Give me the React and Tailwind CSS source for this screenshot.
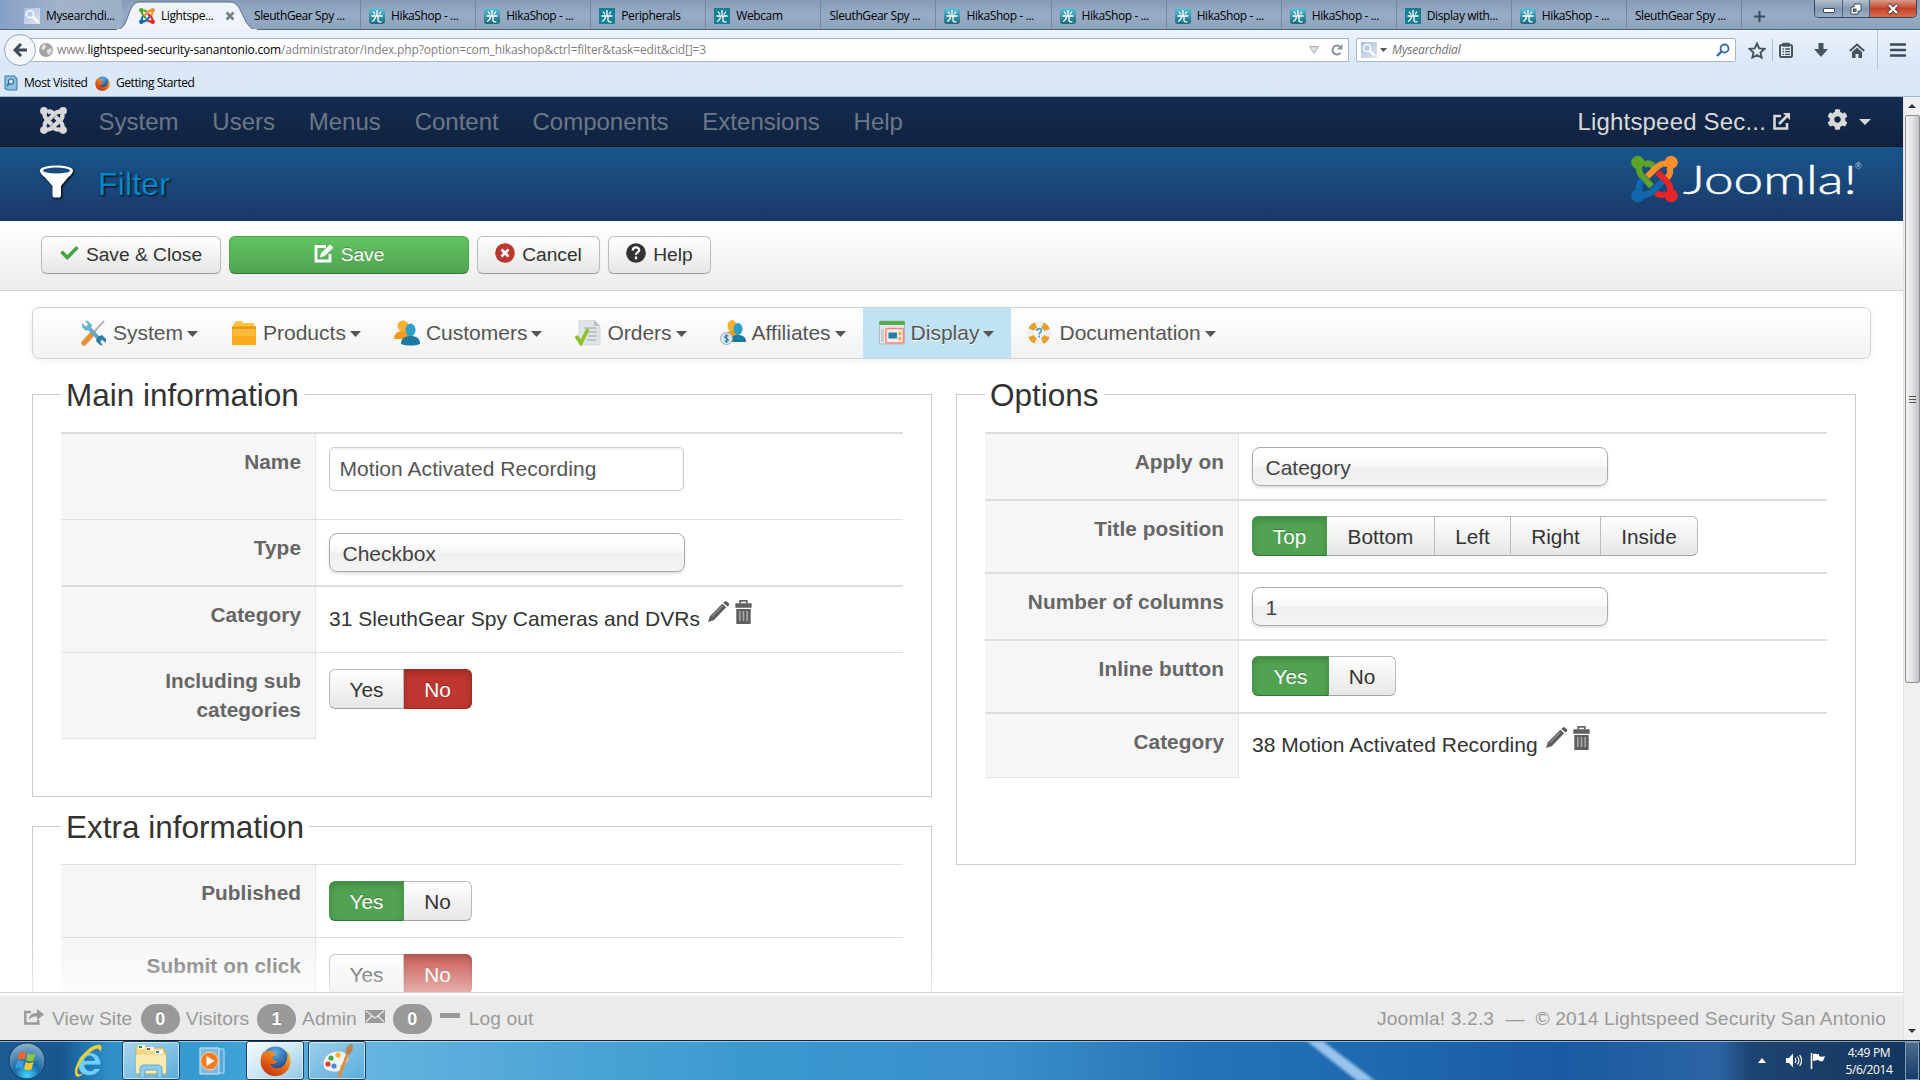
import React from "react";
import { FaCheck, FaCog } from "react-icons/fa";

const UI = "font-['Open_Sans','Noto_Sans',sans-serif]";

/* ---------- shared drawings ---------- */

function JoomlaMark({ className, colors, weight = 6.4 }) {
  const [green, orange, red, blue] = colors;
  return (
    <svg className={className} viewBox="0 0 48 48" fill="none" strokeWidth={weight}>
      <g stroke={green}>
        <path d="M13 9.500C18 6.500 21.500 9 23.500 12" />
        <path d="M8 9C8 21 10 19 21 31.500" />
        <circle cx="7" cy="7" r="6.800" fill={green} stroke="none" />
      </g>
      <g stroke={orange}>
        <path d="M39 12C41.500 17 39.500 20 37 23" />
        <path d="M40 8C28 8 29 9.500 16.500 21.500" />
        <circle cx="41" cy="7" r="6.800" fill={orange} stroke="none" />
      </g>
      <g stroke={red}>
        <path d="M36 39C31 42 28 40 25 37.500" />
        <path d="M40.500 40C40.500 28 39 29.500 27 17" />
        <circle cx="41" cy="41" r="6.800" fill={red} stroke="none" />
      </g>
      <g stroke={blue}>
        <path d="M9.500 36C6.500 31 9 28 11.500 25" />
        <path d="M8 40.500C20 40.500 19.500 39 32 26.500" />
        <circle cx="7" cy="41" r="6.800" fill={blue} stroke="none" />
      </g>
    </svg>
  );
}

const BRAND = ["#5ba329", "#fb8f2c", "#e62527", "#1069ae"];
const PALE = ["#d9d9d9", "#d9d9d9", "#d9d9d9", "#d9d9d9"];

function HikaIcon({ flat }) {
  return (
    <svg className="h-4 w-4 shrink-0" viewBox="0 0 16 16">
      <defs>
        <linearGradient id="hika" x1="0" y1="0" x2="0" y2="1">
          <stop offset="0" stopColor="#5ec0d6" />
          <stop offset="1" stopColor="#17697b" />
        </linearGradient>
      </defs>
      <rect width="16" height="16" rx={flat ? 0 : 3} fill={flat ? "#177f93" : "url(#hika)"} />
      <path d="M8 2v6M4 3.500l2 3M12 3.500l-2 3M2.500 8h11M6.500 8c0 3-1.500 4.500-3.500 5.500M9 8v4.500c0 1 .5 1.300 1.500 1.300h2" stroke="#fff" strokeWidth="1.300" fill="none" />
    </svg>
  );
}

function SearchTile() {
  return (
    <svg className="h-4 w-4 shrink-0" viewBox="0 0 16 16">
      <defs>
        <linearGradient id="tile" x1="0" y1="0" x2="1" y2="1">
          <stop offset="0" stopColor="#a9bedd" />
          <stop offset="1" stopColor="#dfe7f3" />
        </linearGradient>
      </defs>
      <rect width="16" height="16" fill="url(#tile)" />
      <circle cx="6" cy="6" r="3.600" fill="#b9cbe6" stroke="#fff" strokeWidth="1.500" />
      <path d="M8.500 8.500l5 5" stroke="#fff" strokeWidth="2.200" />
    </svg>
  );
}

function FirefoxIcon({ className }) {
  return (
    <svg className={className} viewBox="0 0 32 32">
      <defs>
        <radialGradient id="fxb" cx=".5" cy=".2" r=".8">
          <stop offset="0" stopColor="#5aaee6" />
          <stop offset="1" stopColor="#0f2f6e" />
        </radialGradient>
        <linearGradient id="fxo" x1="1" y1="0" x2="0.300" y2="1">
          <stop offset="0" stopColor="#fbd13c" />
          <stop offset=".45" stopColor="#ee7a1a" />
          <stop offset="1" stopColor="#c8320c" />
        </linearGradient>
      </defs>
      <circle cx="16" cy="15" r="14" fill="url(#fxb)" />
      <path d="M4 6C1 10 0 15 1 20c2 7 8 11.500 15 11.500C25 31.500 31.500 25 31.500 16c0-4-1.500-8-4-10.500 1 3 1 5 .500 8-1 6-5 10-10 10-4 0-7-2-8-5 2 1 4.500 1 6.500-.5 1-.8 2-1.500 1-2-3-.5-5-2-5-4 1-1.500 4-2 4.500-3-1-1-3-1-4-2.500C9 4 6 6 5 8z" fill="url(#fxo)" />
    </svg>
  );
}

/* ---------- browser chrome ---------- */

const TABS = [
  ["SleuthGear Spy ...", null],
  ["HikaShop - ...", "round"],
  ["HikaShop - ...", "round"],
  ["Peripherals", "flat"],
  ["Webcam", "flat"],
  ["SleuthGear Spy ...", null],
  ["HikaShop - ...", "round"],
  ["HikaShop - ...", "round"],
  ["HikaShop - ...", "round"],
  ["HikaShop - ...", "round"],
  ["Display with...", "flat"],
  ["HikaShop - ...", "round"],
  ["SleuthGear Spy ...", null],
];

function TabStrip() {
  return (
    <div className={`relative flex h-[30px] border-b border-[#4d6179] bg-gradient-to-b from-[#869bb5] via-[#97acc6] to-[#8da2bb] text-[12px] tracking-[-0.4px] text-black ${UI}`}>
      <div className="flex w-[122px] items-center gap-1.5 bg-gradient-to-r from-[#86a0c8] via-[#a3b3c9] to-[#9bafc7] pt-[2px] pl-6">
        <SearchTile />
        Mysearchdi...
      </div>
      <div className="relative flex w-[124px] items-center pt-[2px]">
        <svg className="absolute -top-px -left-[6px] h-[31px] w-[142px]" viewBox="0 0 142 31">
          <path d="M0 31C14 31 10 3 24 3H114C128 3 126 31 142 31Z" fill="#eff4fb" stroke="#5c7087" />
          <path d="M1 31H141" stroke="#ebf1fa" strokeWidth="2" />
        </svg>
        <div className="relative flex items-center gap-1.5 pl-[17px]">
          <JoomlaMark className="h-4 w-4" colors={BRAND} />
          Lightspe...
        </div>
        <svg className="absolute top-[11px] left-[103px] h-[10px] w-[10px]" viewBox="0 0 10 10">
          <path d="M1.500 1.500l7 7M8.500 1.500l-7 7" stroke="#76808c" strokeWidth="2.600" />
        </svg>
      </div>
      {TABS.map(([label, icon], i) => (
        <div key={i} className="flex w-[115.080px] items-center gap-1.5 border-r border-[#74889f] pt-[2px] pl-2 whitespace-nowrap">
          {icon && <HikaIcon flat={icon === "flat"} />}
          {label}
        </div>
      ))}
      <svg className="mt-[11px] ml-[12px] h-[11px] w-[11px]" viewBox="0 0 11 11">
        <path d="M5.500 0v11M0 5.500h11" stroke="#3b4a58" strokeWidth="2" />
      </svg>
      <div className="absolute top-0 right-[3px] flex h-[18px] w-[103px] overflow-hidden rounded-b-[5px] border border-t-0 border-[#34465c]">
        <div className="flex w-[28px] items-center justify-center border-r border-[#4b5e75] bg-gradient-to-b from-[#b3c0d0] via-[#8499b1] to-[#9bafc6] pt-[3px]">
          <div className="h-[5px] w-[12px] rounded-[1px] border border-[#3e4b5b] bg-white" />
        </div>
        <div className="flex w-[27px] items-center justify-center border-r border-[#4b5e75] bg-gradient-to-b from-[#b3c0d0] via-[#8499b1] to-[#9bafc6]">
          <svg className="h-[12px] w-[12px]" viewBox="0 0 12 12">
            <path d="M4 1h7v7h-3v3H1V4h3z" fill="#fff" stroke="#3e4b5b" />
            <rect x="3.500" y="6" width="2.500" height="2.500" fill="#8195ad" stroke="#3e4b5b" />
          </svg>
        </div>
        <div className="flex flex-1 items-center justify-center bg-gradient-to-b from-[#d99a8b] via-[#c2412a] to-[#d86f4b]">
          <svg className="h-[12px] w-[14px]" viewBox="0 0 14 12">
            <path d="M2.500 1.500l9 9M11.500 1.500l-9 9" stroke="#5c3a38" strokeWidth="4.200" />
            <path d="M3 2l8 8M11 2l-8 8" stroke="#fff" strokeWidth="2.400" />
          </svg>
        </div>
      </div>
    </div>
  );
}

function Toolbar() {
  return (
    <div className={`relative flex h-[40px] items-center text-[12px] ${UI}`}>
      <div className="z-10 ml-1 flex h-8 w-8 shrink-0 items-center justify-center rounded-full border border-[#93a7be] bg-[#f3f7fc]">
        <svg className="h-[14px] w-[15px]" viewBox="0 0 15 14">
          <path d="M8 1L2 7l6 6M2.500 7H14" stroke="#3c4956" strokeWidth="3" fill="none" />
        </svg>
      </div>
      <div className="-ml-[14px] flex h-6 w-[1327px] shrink-0 items-center border border-[#a4b7ce] bg-white pl-[16px] text-[#808080]">
        <svg className="mr-[4px] h-[14px] w-[14px]" viewBox="0 0 14 14">
          <circle cx="7" cy="7" r="7" fill="#a3a3a3" />
          <path d="M3 3l3-2 1 3-2 3-3-1zM8 7l4-2 1 3-3 4-2-2z" fill="#e1e1e1" />
        </svg>
        <span className="tracking-[-0.15px] whitespace-nowrap">
          www.<span className="tracking-[-0.18px] text-black">lightspeed-security-sanantonio.com</span>
          /administrator/index.php?option=com_hikashop&amp;ctrl=filter&amp;task=edit&amp;cid[]=3
        </span>
        <svg className="mr-[12px] ml-auto h-[8px] w-[10px]" viewBox="0 0 10 8">
          <path d="M.5.5h9L5 7.500z" fill="#dbe0e6" stroke="#a9b3be" />
        </svg>
        <svg className="mr-[5px] h-[12px] w-[12px]" viewBox="0 0 12 12">
          <path d="M9.500 9A4.500 4.500 0 1 1 9 2.700" fill="none" stroke="#8492a3" strokeWidth="2" />
          <path d="M11.500 0v5.500H6z" fill="#8492a3" />
        </svg>
      </div>
      <div className="ml-[7px] flex h-6 w-[380px] shrink-0 items-center rounded-[2px] border border-[#a4b7ce] bg-white pl-1 text-[#707070] italic">
        <SearchTile />
        <svg className="mx-[3px] h-[4px] w-[7px]" viewBox="0 0 7 4"><path d="M0 0h7L3.500 4z" fill="#555" /></svg>
        <span className="ml-[2px] tracking-[-0.150px]">Mysearchdial</span>
        <svg className="mr-[5px] ml-auto h-[14px] w-[14px]" viewBox="0 0 14 14">
          <circle cx="8.500" cy="5.500" r="4" fill="none" stroke="#2f6db0" strokeWidth="1.800" />
          <path d="M5.500 8.500l-4.500 4.500" stroke="#2f6db0" strokeWidth="2.400" />
        </svg>
      </div>
      <svg className="ml-[12px] h-[17px] w-[18px] shrink-0" viewBox="0 0 18 17">
        <path d="M9 1.500l2.200 4.900 5.300.5-4 3.600 1.200 5.200L9 13l-4.700 2.700 1.200-5.200-4-3.600 5.300-.5z" fill="none" stroke="#47535f" strokeWidth="1.900" />
      </svg>
      <div className="mx-[6px] h-[22px] w-px bg-[#aebccd]" />
      <svg className="h-[16px] w-[14px] shrink-0" viewBox="0 0 14 16">
        <rect x="1" y="3" width="12" height="12" rx="1.500" fill="none" stroke="#47535f" strokeWidth="2" />
        <path d="M4 4V1.500h6V4zM3.500 7h1.500M6 7h5M3.500 9.700h1.500M6 9.700h5M3.500 12.300h1.500M6 12.300h5" fill="#47535f" stroke="#47535f" strokeWidth="1.300" />
      </svg>
      <svg className="ml-[21px] h-[14px] w-[14px] shrink-0" viewBox="0 0 14 14">
        <path d="M4.500 0h5v6H14l-7 8-7-8h4.500z" fill="#47535f" />
      </svg>
      <svg className="ml-[21px] h-[15px] w-[16px] shrink-0" viewBox="0 0 16 15">
        <path d="M.8 8L8 1.500 15.200 8" fill="none" stroke="#47535f" strokeWidth="2" />
        <path d="M3 9l5-4.500L13 9v6H9.500v-4h-3v4H3z" fill="#47535f" />
      </svg>
      <div className="mr-[12px] ml-[12px] h-[40px] w-px bg-[#b6c5d7]" />
      <svg className="h-[14px] w-[16px] shrink-0" viewBox="0 0 16 14">
        <path d="M1 1.500h14M1 7h14M1 12.500h14" stroke="#3d4a57" strokeWidth="2.600" strokeLinecap="round" />
      </svg>
    </div>
  );
}

function Bookmarks() {
  return (
    <div className={`flex h-[27px] items-center pb-px pl-1 text-[12px] tracking-[-0.42px] text-black ${UI}`}>
      <svg className="mr-[6px] h-[16px] w-[14px]" viewBox="0 0 14 16">
        <path d="M1 1h10v2h2v12H3v-1H1z" fill="#8fc0e0" stroke="#3d7ba8" />
        <circle cx="7" cy="6.500" r="2.500" fill="#e8f4fb" stroke="#2d6690" strokeWidth="1.200" />
        <path d="M5 8.500L3 11" stroke="#2d6690" strokeWidth="1.600" />
      </svg>
      <span className="w-[71px] whitespace-nowrap">Most Visited</span>
      <FirefoxIcon className="mr-[6px] h-[15px] w-[15px]" />
      <span className="whitespace-nowrap">Getting Started</span>
    </div>
  );
}

/* ---------- admin page ---------- */

function Navbar() {
  return (
    <div className="flex h-[50px] shrink-0 items-center border-b border-[#0b1728] bg-gradient-to-b from-[#142b52] to-[#10223e] text-[24px] text-[#6d7788]">
      <JoomlaMark className="mr-[31.500px] mb-[2px] ml-[40px] h-[27px] w-[27px]" colors={PALE} weight={7.6} />
      <div className="flex gap-[33.800px]">
        {["System", "Users", "Menus", "Content", "Components", "Extensions", "Help"].map((t) => (
          <span key={t}>{t}</span>
        ))}
      </div>
      <span className="ml-auto tracking-[0.18px] text-[#d9d9d9]">Lightspeed Sec...</span>
      <svg className="mr-[37px] ml-[7px] h-[17px] w-[17px]" viewBox="0 0 17 17">
        <path d="M8 3H1.500v12.500H14V10" fill="none" stroke="#d9d9d9" strokeWidth="2.600" />
        <path d="M6 11L14 3" stroke="#d9d9d9" strokeWidth="2.600" />
        <path d="M10 0h7v7z" fill="#d9d9d9" />
      </svg>
      <FaCog className="mb-[5px] h-[21px] w-[21px] text-[#d9d9d9]" />
      <svg className="mr-[32px] ml-[11px] h-[6px] w-[12px]" viewBox="0 0 12 6"><path d="M0 0h12L6 6z" fill="#d9d9d9" /></svg>
    </div>
  );
}

function Header() {
  return (
    <div className="flex h-[74px] shrink-0 bg-gradient-to-b from-[#17568c] to-[#1a3867]">
      <svg className="mt-[17px] ml-[39px] h-[35px] w-[36px] drop-shadow-[1px_1px_1px_#000]" viewBox="0 0 36 35">
        <path d="M1 6.500C1 -.2 34 -.2 34 6.500c0 2.500-2 4.500-5 7l-7 8.500V31c0 2-1 2.500-2 2.500h-4.500c-1.500 0-2-1-2-2.500V22L6 13.500C3 11 1 9 1 6.500z" fill="#fff" />
        <ellipse cx="17.500" cy="6.500" rx="13.500" ry="3" fill="#1a4a7c" />
      </svg>
      <span className="mt-[17px] ml-[23px] text-[32px] leading-[40px] tracking-[0.15px] text-[#0088cc] [text-shadow:1px_1px_2px_#000]">Filter</span>
      <JoomlaMark className="mt-[8px] ml-auto h-[48px] w-[47px]" colors={BRAND} />
      <svg className="mt-[8px] mr-[38px] ml-[5px] h-[56px] w-[182px]" viewBox="0 0 182 56">
        <text x="0" y="39" fill="#fff" stroke="#fff" strokeWidth=".5" fontFamily="Lato" fontWeight="300" fontSize="40" textLength="174" lengthAdjust="spacingAndGlyphs">Joomla!</text>
        <text x="172" y="14" fill="#b9cbe0" fontFamily="Liberation Sans" fontSize="9">®</text>
      </svg>
    </div>
  );
}

const BTN = "flex h-[38px] items-center justify-center rounded-[6px] border border-[#bbb] border-b-[#a2a2a2] bg-gradient-to-b from-white to-[#e6e6e6] text-[19.200px] text-[#333] shadow-[0_1px_2px_rgba(0,0,0,.05)]";

function ActionBar() {
  return (
    <div className="flex h-[70px] shrink-0 gap-[8px] border-b border-[#d3d3d3] bg-gradient-to-b from-white to-[#ededed] pt-[15px] pl-[41px]">
      <div className={`${BTN} w-[180px]`}>
        <FaCheck className="mr-[7px] mb-[4px] h-[18px] w-[19px] text-[#46a546]" />Save &amp; Close
      </div>
      <div className="flex h-[38px] w-[240px] items-center justify-center rounded-[6px] border border-[#46a546] border-b-[#387038] bg-gradient-to-b from-[#62c462] to-[#51a351] text-[19.200px] text-white [text-shadow:0_-1px_0_rgba(0,0,0,.25)]">
        <svg className="mr-[7px] mb-[4px] h-[19px] w-[20px]" viewBox="0 0 20 19">
          <path d="M12 2.500H2v14.500h14v-7" fill="none" stroke="#fff" strokeWidth="2.800" />
          <path d="M6 13.500l1-4.500L16 .5l3.500 3L10.500 12z" fill="#fff" />
        </svg>
        Save
      </div>
      <div className={`${BTN} w-[123px]`}>
        <svg className="mr-[7px] mb-[4px] h-[20px] w-[20px]" viewBox="0 0 20 20">
          <circle cx="10" cy="10" r="9.800" fill="#bd362f" />
          <path d="M6.500 6.500l7 7M13.500 6.500l-7 7" stroke="#fff" strokeWidth="2.600" />
        </svg>
        Cancel
      </div>
      <div className={`${BTN} w-[103px]`}>
        <svg className="mr-[7px] mb-[4px] h-[20px] w-[20px]" viewBox="0 0 20 20">
          <circle cx="10" cy="10" r="9.800" fill="#333" />
          <path d="M6.800 7.500c0-4 6.400-4 6.400-.4 0 2.300-3.200 2.300-3.200 4.700M10 13.500v2.700" stroke="#fff" strokeWidth="2.300" fill="none" />
        </svg>
        Help
      </div>
    </div>
  );
}

const MENU_ICONS = {
  System: (
    <>
      <path d="M23 1L13 12" stroke="#b4b9bd" strokeWidth="2" />
      <path d="M12 13L3 23" stroke="#e8913a" strokeWidth="5.500" strokeLinecap="round" />
      <path d="M6 6l14 15" stroke="#5fa9c4" strokeWidth="4" />
      <path d="M1 3v4l4 4 5-2 1-4-4-4-3-.5 3 4-2 2z" fill="#6db4cc" />
      <path d="M25 23v-4l-4-4-5 2-1 4 4 4 3 .5-3-4 2-2z" fill="#2c7fa0" />
    </>
  ),
  Products: (
    <>
      <path d="M2 5l3-4h6l1 2h11v5H2z" fill="#ffc445" />
      <rect x="1" y="6" width="24" height="19" rx="1" fill="#fba919" />
      <path d="M1 8h24" stroke="#d9860a" />
      <path d="M2 9h22v7H2z" fill="#fdb93a" />
    </>
  ),
  Customers: (
    <>
      <circle cx="9" cy="6" r="5.500" fill="#f9b233" />
      <path d="M0 19c0-6 4-8 9-8s8 2 8 8z" fill="#f39a1d" />
      <ellipse cx="16.500" cy="10" rx="5" ry="6.500" fill="#2e9fc9" />
      <path d="M7 24c0-6 4-8 9.500-8s9.500 2 9.500 8c-6 2-13 2-19 0z" fill="#1d7a9f" />
    </>
  ),
  Orders: (
    <>
      <path d="M4 0h15l6 6v19H4z" fill="#dfe4e8" stroke="#c3c9ce" strokeWidth=".6" />
      <path d="M19 0v6h6z" fill="#b9c0c6" />
      <path d="M9 8h12M12 12h10M13 16h9M12 20h9" stroke="#b3b9be" strokeWidth="1.400" />
      <path d="M1 16l5 7 7-14" fill="none" stroke="#8cc21f" strokeWidth="3.600" />
    </>
  ),
  Affiliates: (
    <>
      <ellipse cx="12" cy="6" rx="4.500" ry="6" fill="#f9b233" />
      <path d="M4 18c0-5 4-7 8-7s6 2 6 7z" fill="#f39a1d" />
      <ellipse cx="18" cy="9" rx="4.500" ry="6" fill="#2e9fc9" />
      <path d="M9 22c0-5 4-7 9-7s8 2 8 7z" fill="#1d7a9f" />
      <circle cx="6.500" cy="18.500" r="6" fill="#dbe8ef" stroke="#8fb2c4" />
      <path d="M8.500 16c-4-1.500-5 2-2 2.500s2 4-2 2.500M6.500 14v9" fill="none" stroke="#3e7d9c" strokeWidth="1.300" />
    </>
  ),
  Display: (
    <>
      <rect x="0.500" y="1" width="25" height="23" rx="1.500" fill="#e5e8e6" stroke="#b4bab6" />
      <rect x="0" y="1" width="26" height="4" rx="1.500" fill="#57ad50" />
      <path d="M2 9h3v13H2z" fill="#c9cdca" />
      <rect x="7" y="8.500" width="17.500" height="14.500" rx="1" fill="#fbe9e7" stroke="#ee8a84" strokeWidth="1.600" />
      <rect x="9.500" y="12.500" width="8.500" height="6" fill="#1f7fa8" />
      <path d="M21 12v3M21 17v3" stroke="#f0a62a" strokeWidth="2.600" />
    </>
  ),
  Documentation: (
    <>
      <circle cx="12" cy="13" r="8.500" fill="none" stroke="#eceef0" strokeWidth="6.500" />
      <circle cx="12" cy="13" r="8.500" fill="none" stroke="#e89d28" strokeWidth="6" strokeDasharray="6.676 6.676" strokeDashoffset="-3.338" />
      <path d="M9.800 11c0-3.200 4.600-3 4.600-.2 0 1.600-2.300 1.800-2.300 3.600M12 15.500v2" fill="none" stroke="#4a9fc0" strokeWidth="1.700" />
    </>
  ),
};

function MenuBar() {
  return (
    <div className="mt-[16px] ml-[32px] flex h-[52px] w-[1839px] shrink-0 rounded-[7px] border border-[#d4d4d4] bg-gradient-to-b from-white to-[#f2f2f2] pl-[32px] text-[21px] text-[#555] shadow-[0_1px_7px_rgba(0,0,0,.07)]">
      {Object.keys(MENU_ICONS).map((name) => (
        <div key={name} className={`flex items-center pr-[17px] pb-px pl-[16px] ${name === "Display" ? "bg-[#bfe3f5]" : ""}`}>
          <svg className="mr-[6px] h-[26px] w-[26px]" viewBox="0 0 26 26">{MENU_ICONS[name]}</svg>
          <span className="[text-shadow:0_1px_0_#fff]">{name}</span>
          <svg className="mt-[3px] ml-[4px] h-[6px] w-[11px]" viewBox="0 0 11 6"><path d="M0 0h11L5.500 6z" fill="#555" /></svg>
        </div>
      ))}
    </div>
  );
}

function Row({ label, height, top = 1, pad, narrow, children }) {
  const line = top === 2 ? "border-t-2" : "border-t";
  return (
    <div className={`flex border-[#ddd] ${line}`} style={{ height }}>
      <div className={`shrink-0 border-r border-[#e5e5e5] bg-[#f6f6f6] pt-[14px] text-right text-[20.800px] leading-[28.800px] font-bold tracking-[0.05px] text-[#666] ${narrow ? "w-[254px] pr-[14px]" : "w-[255px] pr-[14px]"}`}>
        {label}
      </div>
      <div className="pl-[13px]" style={{ paddingTop: pad }}>{children}</div>
    </div>
  );
}

function Panel({ title, className, children }) {
  return (
    <fieldset className={`border border-[#ccc] pl-[28px] ${className}`}>
      <legend className="px-[5px] pt-[3px] text-[31.500px] leading-[29px] text-[#333]">{title}</legend>
      <div className="mt-[22px] w-[842px]">{children}</div>
    </fieldset>
  );
}

function Select({ value }) {
  return (
    <div className="flex h-[39px] w-[356px] items-center rounded-[8px] border border-[#aaa] bg-[linear-gradient(#fff_20%,#f6f6f6_50%,#eee_52%,#f4f4f4_100%)] pt-[2px] pl-[12.500px] text-[21px] text-[#444] shadow-[0_2px_3px_rgba(0,0,0,.12)]">
      {value}
    </div>
  );
}

function Toggle({ options, active, tone }) {
  const on = tone === "red"
    ? "border-[#a02c26] bg-[#bd362f] text-white shadow-[inset_0_3px_6px_rgba(0,0,0,.18)] [text-shadow:0_-1px_0_rgba(0,0,0,.25)]"
    : "border-[#46994a] border-b-[#387038] bg-[#51a351] text-white shadow-[inset_0_3px_6px_rgba(0,0,0,.18)] [text-shadow:0_-1px_0_rgba(0,0,0,.25)]";
  const off = "border-[#bbb] border-b-[#a2a2a2] bg-gradient-to-b from-white to-[#e6e6e6] text-[#333]";
  return (
    <div className="flex h-[40px] text-[20.800px]">
      {options.map(([label, w], i) => (
        <div
          key={label}
          className={`flex items-center justify-center border pt-px first:rounded-l-[6px] last:rounded-r-[6px] ${i > 0 ? "border-l-0" : ""} ${i === active ? on : off}`}
          style={{ width: w }}
        >
          {label}
        </div>
      ))}
    </div>
  );
}

function EntryWithTools({ text }) {
  return (
    <div className="flex text-[21px] leading-[28px] text-[#333]">
      <span className="pt-[5px] tracking-[0.03px] whitespace-nowrap">{text}</span>
      <svg className="ml-[7px] h-[23px] w-[23px]" viewBox="0 0 24 24">
        <path d="M1 23l2-6L16 4l4 3.500L7 21z" fill="#5c5c5c" />
        <path d="M5 17.500L16 6.500" stroke="#8d8d8d" strokeWidth="1.600" />
        <path d="M18 2c1-2 6 1 5 3.500l-1.500 1.200-4.500-3.700z" fill="#5c5c5c" />
      </svg>
      <svg className="ml-[5px] h-[24px] w-[17px]" viewBox="0 0 17 25">
        <path d="M5 3.500V1h7v2.500" fill="none" stroke="#666" strokeWidth="1.800" />
        <path d="M0 3.500h17V8H0zM1 9.500h15V25H1z" fill="#606060" />
        <path d="M4.700 11.500V22M8.500 11.500V22M12.300 11.500V22" stroke="#aaa" strokeWidth="1.600" />
      </svg>
    </div>
  );
}

function Badge({ n, className }) {
  return (
    <span className={`flex h-[30px] w-[39px] items-center justify-center rounded-full bg-[#999] text-[18px] font-bold tracking-normal text-white [text-shadow:0_-1px_0_rgba(0,0,0,.25)] ${className}`}>{n}</span>
  );
}

function StatusBar() {
  return (
    <div className="absolute bottom-0 left-0 flex h-[48px] w-[1903px] items-center border-t border-[#d4d4d4] bg-[#ebebeb] pt-[5px] text-[19.200px] tracking-[0.08px] text-[#999] shadow-[inset_0_3px_0_#fcfcfc]">
      <svg className="mr-[8px] mb-[5px] ml-[24px] h-[16px] w-[20px]" viewBox="0 0 20 16">
        <path d="M7 3H1.300v11.500h13V11" fill="none" stroke="#999" strokeWidth="2.400" />
        <path d="M5 11c0-5 3-7 8-7V0l7 5.500-7 5.500V7.500C9 7.500 7 8 5 11z" fill="#999" />
      </svg>
      View Site
      <Badge n="0" className="mr-[6px] ml-[8.500px]" />
      Visitors
      <Badge n="1" className="mr-[6px] ml-[8px]" />
      Admin
      <svg className="mr-[8px] mb-[5px] ml-[8px] h-[13px] w-[20px]" viewBox="0 0 20 13">
        <rect width="20" height="13" fill="#999" />
        <path d="M1 1l9 7 9-7M1 12l6-6M19 12l-6-6" fill="none" stroke="#ebebeb" strokeWidth="1.300" />
      </svg>
      <Badge n="0" className="mr-[8px]" />
      <span className="mr-[9px] mb-[7px] h-[5px] w-[20px] rounded-[1px] bg-[#999]" />
      Log out
      <span className="mr-[17px] ml-auto tracking-[0.150px] whitespace-pre">Joomla! 3.2.3 {" — "} © 2014 Lightspeed Security San Antonio</span>
    </div>
  );
}

function Scrollbar() {
  return (
    <div className="flex w-[17px] shrink-0 flex-col items-center border-l border-[#e2e2e2] bg-[#f0f0f0]">
      <svg className="mt-[7px] h-[4px] w-[8px]" viewBox="0 0 8 4"><path d="M4 0l4 4H0z" fill="#333" /></svg>
      <div className="mt-[7px] flex h-[568px] w-[15px] flex-col items-center justify-center gap-[2px] rounded-[2px] border border-[#8e8e8e] bg-gradient-to-r from-[#f5f5f5] via-[#e2e2e4] to-[#bfc0c4]">
        <div className="h-px w-[7px] bg-[#555]" />
        <div className="h-px w-[7px] bg-[#555]" />
        <div className="h-px w-[7px] bg-[#555]" />
      </div>
      <svg className="mt-auto mb-[7px] h-[4px] w-[8px]" viewBox="0 0 8 4"><path d="M0 0h8L4 4z" fill="#333" /></svg>
    </div>
  );
}

/* ---------- taskbar ---------- */

const TASK = "flex h-[39px] w-[58px] items-center justify-center rounded-[3px] border border-[#1c3f5e] shadow-[inset_0_0_0_1px_rgba(255,255,255,.55)]";

function Taskbar() {
  return (
    <div className="relative flex h-[40px] shrink-0 items-center overflow-hidden border-t border-[#0d2236] bg-[linear-gradient(90deg,#1c5b93_0px,#17568f_60px,#2f8fc8_110px,#3a9fd5_220px,#64b4df_370px,#4da5d7_560px,#3a98cf_760px,#3a8fcb_1000px,#2573b7_1200px,#1e69b0_1380px,#1a5aa2_1560px,#2b64a3_1720px,#1d4470_1750px,#14375f_1900px)] shadow-[inset_0_1px_0_rgba(255,255,255,.5)]">
      <svg className="absolute top-0 left-[1300px] h-[40px] w-[90px] blur-[1.500px]" viewBox="0 0 90 40" preserveAspectRatio="none">
        <path d="M4 -2h16l58 44H60z" fill="#a6cdf3" opacity=".9" />
      </svg>
      <svg className="ml-[8px] h-[38px] w-[38px]" viewBox="0 0 38 38">
        <defs>
          <radialGradient id="orb" cx=".5" cy=".9" r=".9">
            <stop offset="0" stopColor="#3fd6ff" />
            <stop offset=".4" stopColor="#1a6ba8" />
            <stop offset="1" stopColor="#8fb3cc" />
          </radialGradient>
        </defs>
        <circle cx="19" cy="19" r="18" fill="url(#orb)" stroke="#153a5c" />
        <path d="M11 11c3-1.800 5-1.300 7 0l-1.500 7c-2-1.300-4-1.600-7 0z" fill="#f0652a" />
        <path d="M19.500 11.500c2.500 1.200 5 1.300 8-.3l-1.800 7.300c-3 1.500-5 1-7.500 0z" fill="#8cc63f" />
        <path d="M9 19.500c3-1.600 5-1.200 7 0l-1.500 7c-2-1.300-4-1.600-7.200 0z" fill="#3d9be0" />
        <path d="M17.500 20c2.500 1.200 5 1.300 8-.3l-1.800 7.300c-3 1.500-5 1-7.500 0z" fill="#fcc62d" />
      </svg>
      <svg className="mr-[17px] ml-[27px] h-[36px] w-[32px]" viewBox="0 0 32 36">
        <path fillRule="evenodd" d="M28 22H11.500c.5 6.500 7.500 7.500 10 3.500h6C24 35 5 36 5 21 5 6 28 5 28 22zM11.500 17.500h10c-.5-6-9.500-6-10 0z" fill="#6fd0fb" stroke="#1c7fc4" strokeWidth=".8" />
        <path d="M3 33C-2 26 12 4 24 2c6-1 5 4 3 7 0-4-3-5-8-1C10 13 2 27 5 31c2 1 4 0 6-1-3 3-6 5-8 3z" fill="#fbd02e" />
      </svg>
      <div className={`${TASK} bg-gradient-to-br from-[#a9d6ee] to-[#5aaedb]`}>
        <svg className="h-[34px] w-[34px]" viewBox="0 0 34 34">
          <path d="M2 6V2h10l2 2h16v4h2v22H2z" fill="#f0d98a" stroke="#c9a94e" strokeWidth=".7" />
          <path d="M4 1h7v4H4zM12 3h8v4h-8zM21 6h8v4h-8z" fill="#fff8e0" />
          <path d="M5 2h3v2H5z" fill="#1e9e3e" /><path d="M13 4h3v2h-3z" fill="#d93425" /><path d="M22 7h3v2h-3z" fill="#1a7fc8" />
          <path d="M2 11h30v18H2z" fill="#f9eab0" />
          <path d="M6 34v-9c0-3 2-4 4-4h14c2 0 4 1 4 4v9h-5v-8H11v8z" fill="#8fcbea" stroke="#4f9cc8" strokeWidth=".8" />
        </svg>
      </div>
      <svg className="mr-[20px] ml-[19px] h-[28px] w-[27px]" viewBox="0 0 27 28">
        <path d="M6 2h19v24H6z" fill="#5aa7d8" stroke="#b9dff4" />
        <path d="M1 1h19v26H1z" fill="#7fb9de" stroke="#d3ecf8" />
        <circle cx="10.500" cy="14" r="8.800" fill="#f47b20" stroke="#fcd5a8" />
        <path d="M7.500 9v10l8-5z" fill="#fff" />
      </svg>
      <div className={`${TASK} bg-gradient-to-br from-[#f4fafd] via-[#cfe7f4] to-[#8fc8e6]`}>
        <FirefoxIcon className="h-[34px] w-[31px]" />
      </div>
      <div className={`${TASK} ml-[4px] bg-gradient-to-br from-[#9bcfeb] to-[#58aedc]`}>
        <svg className="h-[36px] w-[32px]" viewBox="0 0 32 36">
          <path d="M2 22c-1-8 7-14 15-14 7 0 11 4 10 9-1 4-6 3-7 6 0 4-1 6-6 6C8 29 3 27 2 22z" fill="#eef3f8" stroke="#9fb5c8" />
          <circle cx="7" cy="21" r="2.600" fill="#e03a2c" /><circle cx="10" cy="15" r="2.600" fill="#3fa845" /><circle cx="17" cy="12" r="2.600" fill="#f6b32a" /><circle cx="13" cy="23" r="2.600" fill="#3f8fd6" />
          <path d="M16 35l9-24 2.500 1-8 22z" fill="#e88b2c" />
          <path d="M25 11c-1-5 1-9 6-10 2 3 0 9-3 11z" fill="#b98352" />
        </svg>
      </div>
      <div className={`ml-auto flex items-center text-[12px] text-white ${UI}`}>
        <svg className="mr-[20px] h-[5px] w-[8px]" viewBox="0 0 8 5"><path d="M4 0l4 5H0z" fill="#fff" /></svg>
        <svg className="mr-[8px] h-[15px] w-[16px]" viewBox="0 0 16 15">
          <path d="M0 5h3l4-4.500v14L3 10H0z" fill="#fff" />
          <path d="M9 5c1 1.500 1 3.500 0 5M11.300 3.500c2 2.500 2 5.500 0 8M13.600 2c2.500 3.500 2.500 7.500 0 11" fill="none" stroke="#fff" strokeWidth="1.200" />
        </svg>
        <svg className="mr-[18px] h-[16px] w-[16px]" viewBox="0 0 16 16">
          <path d="M1.500 0v16" stroke="#fff" strokeWidth="1.600" />
          <path d="M3 1c3-1 4 1 6 0v2c2 1 4 1 6 0-1 3-2 5-2 5-2 1-3 0-5-1-2 0-3 1-5 1z" fill="#fff" />
        </svg>
        <div className="w-[50px] text-center leading-[17px] tracking-[-0.350px] whitespace-nowrap">
          <div>4:49 PM</div>
          <div>5/6/2014</div>
        </div>
        <div className="mr-px ml-[11px] h-[38px] w-[14px] border border-[#7f9ab5] bg-gradient-to-b from-[#4d6b8b] to-[#153c69]" />
      </div>
    </div>
  );
}

export default function App() {
  return (
    <div className="flex h-[1080px] w-[1920px] flex-col overflow-hidden bg-white font-['Liberation_Sans',Arial,sans-serif]">
      <TabStrip />
      <div className="h-[67px] shrink-0 border-b border-[#a3b6cc] bg-gradient-to-b from-[#ebf2fb] via-[#dbe8f7] to-[#d9e8f7]">
        <Toolbar />
        <Bookmarks />
      </div>
      <div className="flex h-[943px] shrink-0">
        <div className="relative flex w-[1903px] shrink-0 flex-col overflow-hidden">
          <Navbar />
          <Header />
          <ActionBar />
          <MenuBar />
          <div className="mt-[19px] flex items-start gap-[24px] pl-[32px]">
            <div className="flex w-[900px] flex-col gap-[13px]">
              <Panel title="Main information" className="h-[419px]">
                <Row label="Name" height={87} top={2} pad={13}>
                  <div className="flex h-[44px] w-[355px] items-center rounded-[5px] border border-[#ccc] pl-[9.500px] text-[21px] tracking-[0.05px] text-[#555] shadow-[inset_0_1px_2px_rgba(0,0,0,.08)]">
                    Motion Activated Recording
                  </div>
                </Row>
                <Row label="Type" height={66} pad={13}><Select value="Checkbox" /></Row>
                <Row label="Category" height={67} top={2} pad={13}><EntryWithTools text="31 SleuthGear Spy Cameras and DVRs" /></Row>
                <Row label={<>Including sub<br />categories</>} height={86} pad={16}>
                  <Toggle options={[["Yes", 75], ["No", 68]]} active={1} tone="red" />
                </Row>
                <div className="h-px w-[255px] bg-[#e5e5e5]" />
              </Panel>
              <Panel title="Extra information" className="h-[300px]">
                <Row label="Published" height={73} pad={16}>
                  <Toggle options={[["Yes", 75], ["No", 68]]} active={0} />
                </Row>
                <Row label="Submit on click" height={73} pad={16}>
                  <Toggle options={[["Yes", 75], ["No", 68]]} active={1} tone="red" />
                </Row>
              </Panel>
            </div>
            <Panel title="Options" className="h-[487px] w-[900px]">
              <Row narrow label="Apply on" height={67} top={2} pad={13}><Select value="Category" /></Row>
              <Row narrow label="Title position" height={73} top={2} pad={15}>
                <Toggle options={[["Top", 75], ["Bottom", 108], ["Left", 76], ["Right", 90], ["Inside", 97]]} active={0} />
              </Row>
              <Row narrow label="Number of columns" height={67} top={2} pad={13}><Select value="1" /></Row>
              <Row narrow label="Inline button" height={73} top={2} pad={15}>
                <Toggle options={[["Yes", 77], ["No", 67]]} active={0} />
              </Row>
              <Row narrow label="Category" height={65} top={2} pad={12}><EntryWithTools text="38 Motion Activated Recording" /></Row>
              <div className="h-px w-[254px] bg-[#e5e5e5]" />
            </Panel>
          </div>
          <div className="absolute bottom-[48px] left-0 h-[56px] w-full bg-gradient-to-b from-white/0 to-white/60" />
          <StatusBar />
        </div>
        <Scrollbar />
      </div>
      <Taskbar />
    </div>
  );
}
